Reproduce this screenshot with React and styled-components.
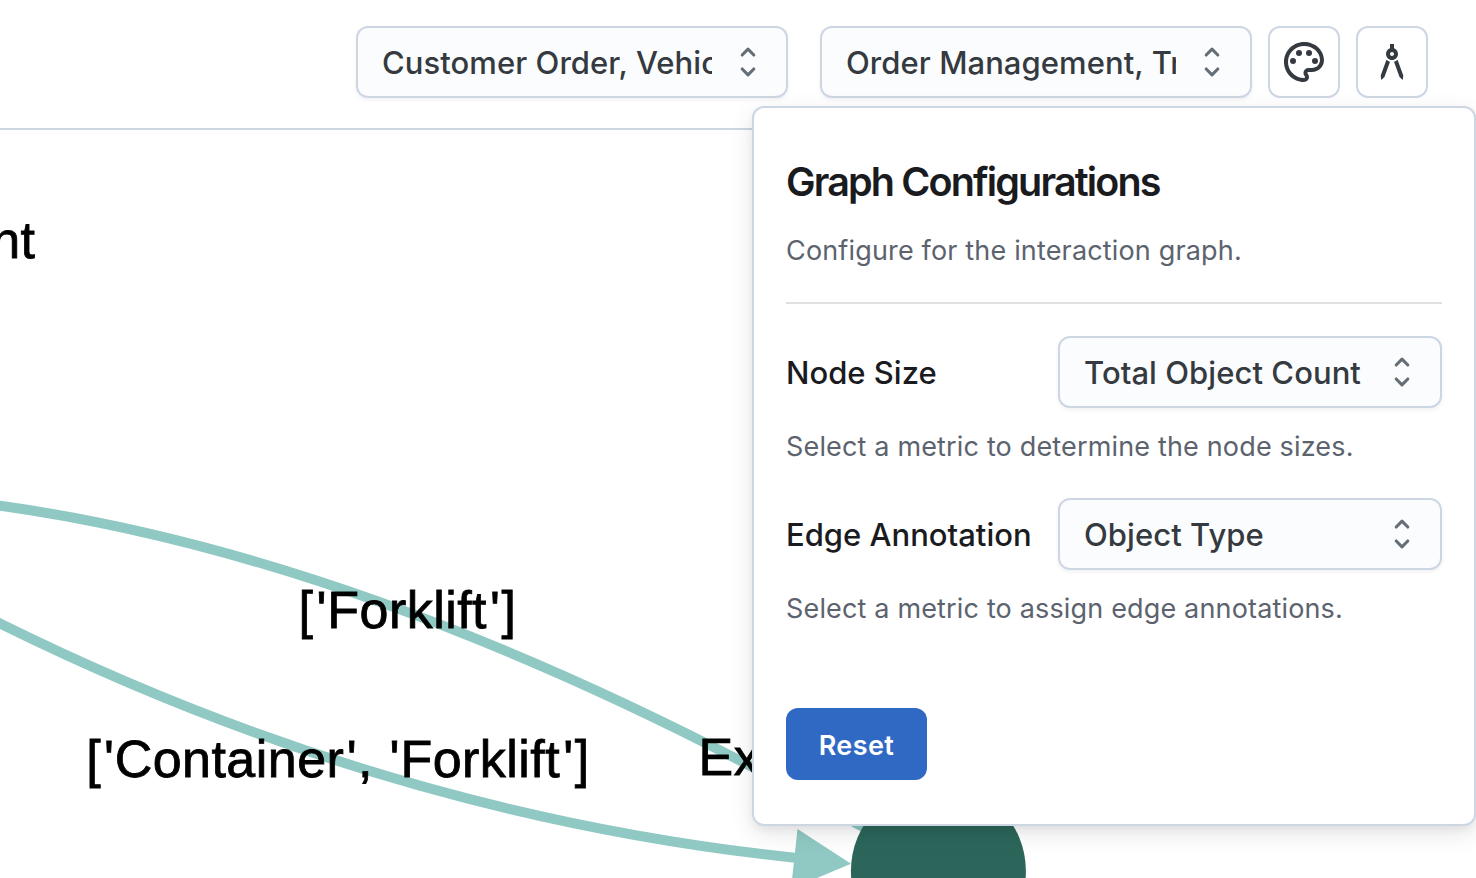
import React from "react";
import styled, { createGlobalStyle } from "styled-components";
import { MdArchitecture, MdOutlinePalette } from "react-icons/md";

const GlobalStyle = createGlobalStyle`
  *, *::before, *::after { box-sizing: border-box; }
  html, body { margin: 0; padding: 0; background: #fff; overflow: hidden; }
  button { font: inherit; }
`;

const Page = styled.div`
  position: relative;
  display: flex;
  flex-direction: column;
  width: 1476px;
  height: 878px;
  overflow: hidden;
  background: #fff;
  color: #1a1b1e;
  font-family: Inter, "Liberation Sans", sans-serif;
`;

const Header = styled.header`
  display: flex;
  justify-content: flex-end;
  align-items: flex-start;
  gap: 16px;
  height: 130px;
  flex: none;
  padding: 26px 48px 0 0;
  border-bottom: 2px solid #cbd6e1;
`;

const Filters = styled.div`
  display: flex;
  gap: 32px;
`;

const SelectButton = styled.button`
  display: flex;
  align-items: center;
  justify-content: space-between;
  flex: none;
  width: ${(p) => p.$width}px;
  height: 72px;
  padding: 0 24px;
  border: 2px solid #cdd7e3;
  border-radius: 12px;
  background: #fbfcfe;
  box-shadow: 0 2px 4px rgba(0, 0, 0, 0.06);
  color: #343a40;
`;

const SelectValue = styled.span`
  width: ${(p) => p.$width}px;
  padding-top: 2px;
  overflow: hidden;
  white-space: nowrap;
  text-align: left;
  font-size: 31px;
  line-height: 40px;
  font-weight: 450;
  letter-spacing: 0.06px;
`;

const SelectIcon = styled.svg`
  flex: none;
  width: 28px;
  height: 32px;
  fill: none;
  stroke: #656d76;
  stroke-width: 3.1;
  stroke-linecap: round;
  stroke-linejoin: round;
`;

const IconButton = styled.button`
  display: flex;
  align-items: center;
  justify-content: center;
  flex: none;
  width: 72px;
  height: 72px;
  padding: 0;
  border: 2px solid #cdd7e3;
  border-radius: 12px;
  background: #fff;
  color: #343a40;
`;

const GraphCanvas = styled.main`
  flex: 1;
  min-height: 0;
`;

const Graph = styled.svg`
  display: block;
  width: 1476px;
  height: 748px;
`;

const Edge = styled.path`
  fill: none;
  stroke: #90c9c3;
  stroke-width: 10;
`;

const GraphLabel = styled.text`
  font-family: "Liberation Sans", Arial, sans-serif;
  font-size: 52px;
  letter-spacing: 0.45px;
  fill: #000;
  stroke: #000;
  stroke-width: 0.8;
`;

const Popover = styled.section`
  position: absolute;
  top: 106px;
  right: 0;
  width: 724px;
  height: 720px;
  padding: 46px 32px 0;
  border: 2px solid #cdd7e3;
  border-radius: 12px;
  background: #fff;
  box-shadow: 0 8px 24px rgba(0, 0, 0, 0.1), 0 4px 8px rgba(0, 0, 0, 0.05);
`;

const Title = styled.h2`
  margin: 0;
  font-size: 39.5px;
  line-height: 56px;
  font-weight: 600;
  letter-spacing: -1.85px;
  white-space: nowrap;
`;

const Description = styled.p`
  margin: ${(p) => p.$top}px 0 0;
  color: #5c636e;
  font-size: 27px;
  line-height: 40px;
  letter-spacing: 0.16px;
  white-space: nowrap;
`;

const Divider = styled.hr`
  height: 2px;
  margin: 31px 0 0;
  border: 0;
  background: #dfe1e3;
`;

const Field = styled.div`
  display: flex;
  align-items: center;
  justify-content: space-between;
  height: 72px;
  margin-top: ${(p) => p.$top}px;
`;

const FieldLabel = styled.span`
  padding-top: 2px;
  font-size: 31px;
  line-height: 40px;
  font-weight: 500;
  white-space: nowrap;
`;

const ResetButton = styled.button`
  display: flex;
  align-items: center;
  justify-content: center;
  width: 141px;
  height: 72px;
  margin-top: 79px;
  padding: 2px 0 0;
  border: 0;
  border-radius: 12px;
  background: #3069c4;
  color: #fff;
  font-size: 27px;
  font-weight: 600;
  letter-spacing: 0.4px;
`;

function Select({ children, width, valueWidth }) {
  return (
    <SelectButton type="button" $width={width}>
      <SelectValue $width={valueWidth}>{children}</SelectValue>
      <SelectIcon viewBox="0 0 28 32">
        <path d="M8.2 9 14 3.2 19.8 9M8.2 23 14 28.8 19.8 23" />
      </SelectIcon>
    </SelectButton>
  );
}

export default function App() {
  return (
    <Page>
      <GlobalStyle />
      <Header>
        <Filters>
          <Select width={432} valueWidth={330}>Customer Order, Vehicle</Select>
          <Select width={432} valueWidth={330}>Order Management, Truck</Select>
        </Filters>
        <IconButton type="button" aria-label="Colors">
          <MdOutlinePalette size={48} />
        </IconButton>
        <IconButton type="button" aria-label="Graph configurations">
          <MdArchitecture size={48} />
        </IconButton>
      </Header>
      <GraphCanvas>
        <Graph viewBox="0 130 1476 748">
          <Edge d="M-20 502.5 L0 505.7 Q389 560 862 826.5 L880 837" />
          <Edge d="M-20 613 L0 623.5 Q387 815 797 858" />
          <path d="M797.5 829 L851 863.7 L791 889 Z" fill="#90c9c3" />
          <circle cx="938.4" cy="871" r="87.5" fill="#2c665b" />
          <GraphLabel x="35.5" y="258" textAnchor="end">nt</GraphLabel>
          <GraphLabel x="298.5" y="628" dx="0 3 0.5 0 0 0 0 0 0 0 3 1.1">
            ['Forklift']
          </GraphLabel>
          <GraphLabel
            x="86.2"
            y="777"
            dx="0 2.8 0.4 0 0 0 0 0 0 0 0 2.4 0.8 0 1.8 0.6 0 0 0 0 0 0 0 3 1.1"
          >
            ['Container', 'Forklift']
          </GraphLabel>
          <GraphLabel x="698.5" y="775">Ex</GraphLabel>
        </Graph>
      </GraphCanvas>
      <Popover>
        <Title>Graph Configurations</Title>
        <Description $top={21}>Configure for the interaction graph.</Description>
        <Divider />
        <Field $top={32}>
          <FieldLabel>Node Size</FieldLabel>
          <Select width={384} valueWidth={290}>Total Object Count</Select>
        </Field>
        <Description $top={19}>Select a metric to determine the node sizes.</Description>
        <Field $top={31}>
          <FieldLabel>Edge Annotation</FieldLabel>
          <Select width={384} valueWidth={290}>Object Type</Select>
        </Field>
        <Description $top={19}>Select a metric to assign edge annotations.</Description>
        <ResetButton type="button">Reset</ResetButton>
      </Popover>
    </Page>
  );
}
